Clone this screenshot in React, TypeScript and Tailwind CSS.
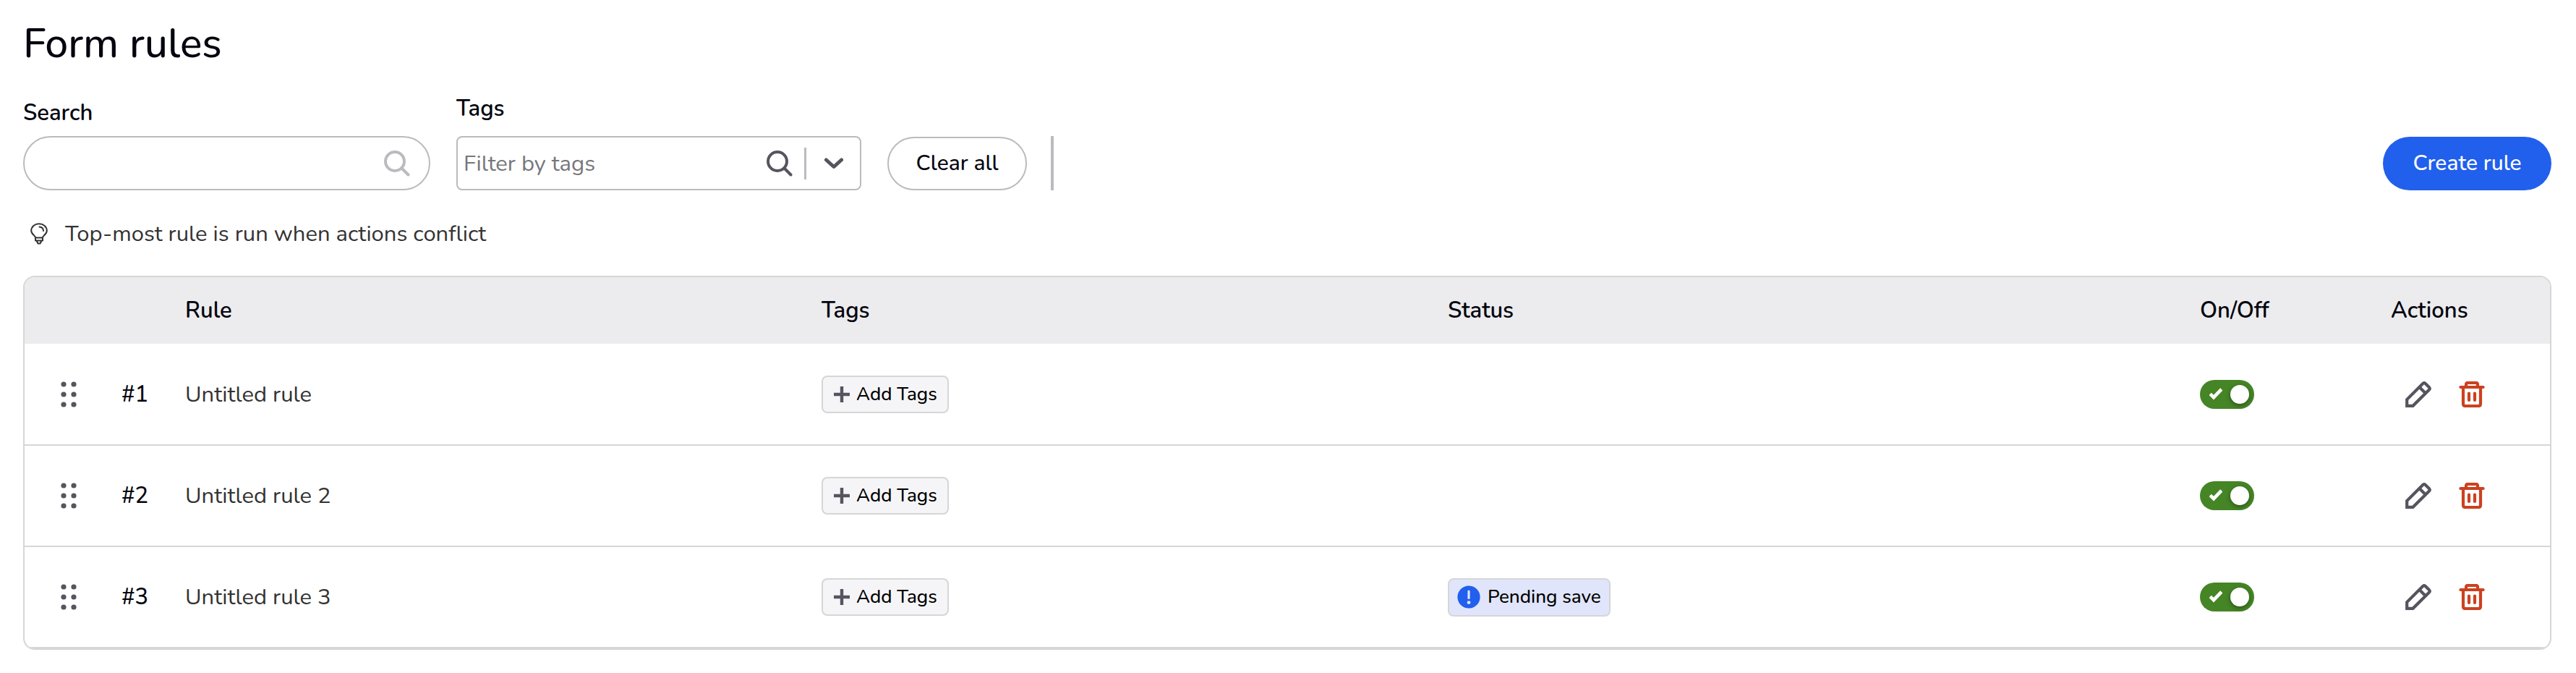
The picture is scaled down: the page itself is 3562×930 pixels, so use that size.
import React, { useState } from 'react'

type Rule = {
  id: number
  name: string
  enabled: boolean
  status?: string
}

const initialRules: Rule[] = [
  { id: 1, name: "Untitled rule", enabled: true },
  { id: 2, name: "Untitled rule 2", enabled: true },
  { id: 3, name: "Untitled rule 3", enabled: true, status: "Pending save" },
];

const SearchIcon = () => (
  <svg viewBox="0 0 36 36" className="size-9 shrink-0" fill="none" stroke="currentColor" strokeWidth="4" aria-hidden="true">
    <circle cx="15" cy="15" r="13" />
    <path d="M24.5 24.5L33.5 33.5" strokeLinecap="round" />
  </svg>
);

const ChevronIcon = () => (
  <svg viewBox="0 0 28 18" className="h-[18px] w-7" fill="none" stroke="currentColor" strokeWidth="5" strokeLinecap="round" strokeLinejoin="round" aria-hidden="true">
    <path d="M3.5 4L14 13.5L24.5 4" />
  </svg>
);

const BulbIcon = () => (
  <svg viewBox="0 0 24 30" className="h-[30px] w-6 shrink-0" fill="none" stroke="currentColor" strokeWidth="2" strokeLinejoin="round" aria-hidden="true">
    <path d="M7 20.5C7 17.5 1.2 16 1.2 10.8C1.2 5.2 6 1.2 12 1.2S22.8 5.2 22.8 10.8C22.8 16 17 17.5 17 20.5Z" />
    <path d="M7 20.5V24.5H17V20.5M8.5 24.5L10.5 28.5H13.5L15.5 24.5" />
    <path d="M12.5 5.6C15.8 5.8 17.8 7.8 18 11" strokeLinecap="round" />
  </svg>
);

const GripIcon = () => (
  <svg viewBox="0 0 22 36" className="h-9 w-[22px]" fill="currentColor" aria-hidden="true">
    <circle cx="4" cy="4" r="3.6" />
    <circle cx="18" cy="4" r="3.6" />
    <circle cx="4" cy="18" r="3.6" />
    <circle cx="18" cy="18" r="3.6" />
    <circle cx="4" cy="32" r="3.6" />
    <circle cx="18" cy="32" r="3.6" />
  </svg>
);

const PlusIcon = () => (
  <svg viewBox="0 0 24 24" className="size-6" fill="none" stroke="currentColor" strokeWidth="4.4" aria-hidden="true">
    <path d="M12 1V23M1 12H23" />
  </svg>
);

const InfoIcon = () => (
  <svg viewBox="0 0 32 32" className="size-8" aria-hidden="true">
    <circle cx="16" cy="16" r="15.6" fill="#215fed" />
    <path d="M16 8V17.5" stroke="#e0e5fb" strokeWidth="3.2" strokeLinecap="round" />
    <circle cx="16" cy="23.6" r="2.4" fill="#e0e5fb" />
  </svg>
);

const PencilIcon = () => (
  <svg viewBox="0 0 36 36" className="size-9" fill="none" stroke="currentColor" strokeWidth="4.2" aria-hidden="true">
    <path d="M2.2 33.8V25L24.5 2.8Q26 1.5 27.5 2.8L33 8.3Q34.5 10 33 11.5L10.5 33.8Z" />
    <path d="M19.5 8L28 16.5" />
  </svg>
);

const TrashIcon = () => (
  <svg viewBox="0 0 36 36" className="size-9" fill="none" stroke="currentColor" strokeWidth="4.2" strokeLinecap="round" strokeLinejoin="round" aria-hidden="true">
    <path d="M2.4 8H33.6" />
    <path d="M10 7V4.4Q10 2 12.4 2H23.6Q26 2 26 4.4V7" />
    <path d="M6 9V31Q6 34 9 34H27Q30 34 30 31V9" />
    <path d="M14 16.5V26M22 16.5V26" />
  </svg>
);

const Toggle = ({ rule, onChange }: { rule: Rule; onChange: () => void }) => (
  <label className="relative block h-10 w-[75px]">
    <input
      type="checkbox"
      checked={rule.enabled}
      onChange={onChange}
      aria-label={`Turn ${rule.name} on or off`}
      className="peer block h-10 w-[75px] appearance-none rounded-full bg-gray-400 checked:bg-[#458526]"
    />
    <svg viewBox="0 0 18 17" className="absolute left-[13px] top-[11px] hidden h-[17px] w-[18px] peer-checked:block" fill="none" stroke="white" strokeWidth="4.6" aria-hidden="true">
      <path d="M1.2 8.4L6 13.2L16.8 1.8" />
    </svg>
    <span className="absolute left-2 top-[7px] size-[26px] rounded-full bg-white shadow-[0_2px_6px_rgba(0,0,0,0.4)] peer-checked:left-[42px]"></span>
  </label>
);

export default function App() {

  const [rules, setRules] = useState<Rule[]>(initialRules)
  const [search, setSearch] = useState<string>("")
  const [tags, setTags] = useState<string>("")

  const toggleRule = (id: number) => {
    setRules(rules.map((r) => (r.id === id ? { ...r, enabled: !r.enabled } : r)))
  }
  const clearAll = () => {
    setSearch("")
    setTags("")
  }

  return (
    <main className="pt-6 pr-[34px] pb-6 pl-8 font-['Nunito','Open_Sans',sans-serif] text-[31px] leading-9 text-[#05050f]">
      <h1 className="text-[57px] font-medium leading-[72px]">Form rules</h1>

      <div className="mt-9 flex items-end">
        <div className="w-[563px]">
          <label htmlFor="search" className="mb-3.5 block font-semibold">Search</label>
          <div className="flex h-[75px] items-center rounded-full border-2 border-[#bbbabf] pr-[26px] pl-8 text-[#bbbabf]">
            <input
              id="search"
              type="text"
              value={search}
              onChange={(e) => setSearch(e.target.value)}
              className="min-w-0 flex-1 text-[#333] outline-none"
            />
            <SearchIcon />
          </div>
        </div>

        <div className="ml-9 w-[560px]">
          <label htmlFor="tags" className="mb-5 block font-semibold">Tags</label>
          <div className="flex h-[75px] items-center rounded-lg border-2 border-[#bbbabf] pl-2 text-[#56545e]">
            <input
              id="tags"
              type="text"
              placeholder="Filter by tags"
              value={tags}
              onChange={(e) => setTags(e.target.value)}
              className="min-w-0 flex-1 text-[#333] outline-none placeholder:text-[#77767c]"
            />
            <SearchIcon />
            <span className="ml-4 h-11 w-[3px] bg-[#bbbabf]"></span>
            <button type="button" aria-label="Show tags" className="pr-[22px] pl-6">
              <ChevronIcon />
            </button>
          </div>
        </div>

        <button type="button" onClick={clearAll} className="ml-9 h-[74px] w-[193px] rounded-full border-2 border-[#bbbabf] text-[30px] font-medium">
          Clear all
        </button>
        <span className="ml-[33px] h-[75px] w-1 bg-[#bbbabf]"></span>

        <button type="button" className="ml-auto h-[74px] w-[233px] rounded-full bg-[#215fed] text-[30px] font-medium text-white">
          Create rule
        </button>
      </div>

      <p className="mt-[42px] flex items-center gap-6 pl-[10px] text-[#333]">
        <BulbIcon />
        Top-most rule is run when actions conflict
      </p>

      <div className="mt-10 overflow-hidden rounded-2xl border-2 border-[#d6d6d8]">
        <table className="w-full table-fixed text-left">
          <thead className="bg-[#ececee]">
            <tr className="h-[92px] [&>th]:font-semibold">
              <th className="w-[134px]"></th>
              <th className="w-[88px]"></th>
              <th className="w-[25.2%]">Rule</th>
              <th className="w-[24.8%]">Tags</th>
              <th>Status</th>
              <th className="w-[264px]">On/Off</th>
              <th className="w-[220px]">Actions</th>
            </tr>
          </thead>
          <tbody>
            {rules.map((rule) => (
              <tr key={rule.id} className="h-[140px] border-b-2 border-[#d6d6d8]">
                <td className="pl-[50px] text-[#56545e]">
                  <button type="button" aria-label={`Move ${rule.name}`} className="block cursor-grab">
                    <GripIcon />
                  </button>
                </td>
                <td className="font-medium">#{rule.id}</td>
                <td className="text-[#333]">{rule.name}</td>
                <td>
                  <button type="button" className="flex h-[52px] items-center gap-2 rounded-lg border-2 border-[#d6d6d8] bg-[#f5f5f8] px-[14px] text-[26px] font-medium text-black">
                    <span className="text-[#56545e]"><PlusIcon /></span>
                    Add Tags
                  </button>
                </td>
                <td>
                  {rule.status && (
                    <span className="flex h-[53px] w-fit items-center gap-[10px] rounded-lg border-2 border-[#d6d6d8] bg-[#e0e5fb] px-[11px] text-[26px] font-medium text-black">
                      <InfoIcon />
                      {rule.status}
                    </span>
                  )}
                </td>
                <td>
                  <Toggle rule={rule} onChange={() => toggleRule(rule.id)} />
                </td>
                <td>
                  <div className="flex gap-[38px] pl-5">
                    <button type="button" aria-label={`Edit ${rule.name}`} className="text-[#56545e]"><PencilIcon /></button>
                    <button type="button" aria-label={`Delete ${rule.name}`} className="text-[#cb4220]"><TrashIcon /></button>
                  </div>
                </td>
              </tr>
            ))}
          </tbody>
        </table>
      </div>
    </main>
  );
}
